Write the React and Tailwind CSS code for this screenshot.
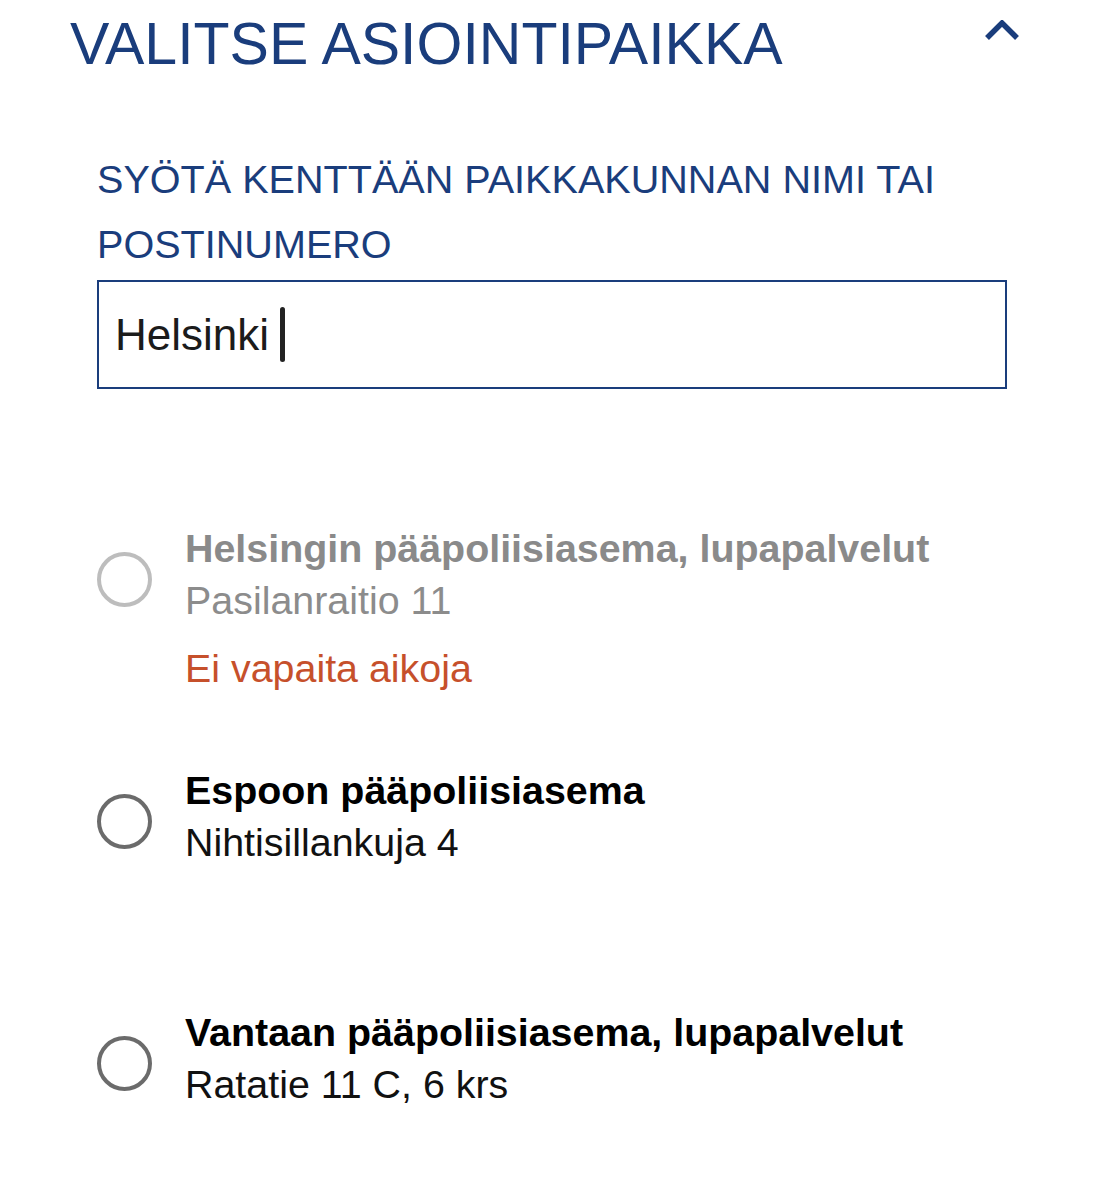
import React from "react";

const offices = [
  {
    id: 1,
    name: "Helsingin pääpoliisiasema, lupapalvelut",
    address: "Pasilanraitio 11",
    status: "Ei vapaita aikoja",
    disabled: true,
  },
  {
    id: 2,
    name: "Espoon pääpoliisiasema",
    address: "Nihtisillankuja 4",
    status: "",
    disabled: false,
  },
  {
    id: 3,
    name: "Vantaan pääpoliisiasema, lupapalvelut",
    address: "Ratatie 11 C, 6 krs",
    status: "",
    disabled: false,
  },
];

const App = () => {
  return (
    <div className="min-h-[1200px] bg-white pl-[70px] pr-[84px] pt-[4px] font-['Liberation_Sans',Arial,sans-serif]">
      {/* Header */}
      <div className="flex items-start justify-between">
        <h1 className="text-[59px] leading-[80px] text-[#1a3d7c] font-normal">
          VALITSE ASIOINTIPAIKKA
        </h1>
        <svg
          width="36"
          height="22"
          viewBox="0 0 36 22"
          className="mt-[16px]"
          fill="none"
        >
          <polyline
            points="3,18 18,3 33,18"
            stroke="#1a3d7c"
            strokeWidth="5.5"
            strokeLinejoin="miter"
          />
        </svg>
      </div>

      <div className="pl-[27px]">
        {/* Search */}
        <label className="mt-[63px] block text-[39.6px] leading-[65px] text-[#1a3d7c]">
          SYÖTÄ KENTTÄÄN PAIKKAKUNNAN NIMI TAI POSTINUMERO
        </label>
        <div className="mt-[3px] flex h-[109px] w-[910px] items-center border-2 border-[#1a3d7c] pl-[16px]">
          <span className="text-[44px] leading-none text-[#1b1b1b]">
            Helsinki
          </span>
          <span className="ml-[11px] inline-block h-[55px] w-[5px] rounded-full bg-[#222]" />
        </div>

        {/* Results */}
        <div className="mt-[133px] flex flex-col gap-[70px]">
          {offices.map((office) => (
            <div key={office.id} className="flex items-start gap-[33px]">
              <div
                className={`mt-[30px] h-[55px] w-[55px] shrink-0 rounded-full border-[4px] ${
                  office.disabled ? "border-[#bdbdbd]" : "border-[#6b6b6b]"
                }`}
              />
              <div className="text-[39.4px] leading-[52px]">
                <p
                  className={`font-bold ${
                    office.disabled ? "text-[#8a8a8a]" : "text-black"
                  }`}
                >
                  {office.name}
                </p>
                <p
                  className={
                    office.disabled ? "text-[#8c8c8c]" : "text-[#111]"
                  }
                >
                  {office.address}
                </p>
                <p className="mt-[16px] h-[52px] text-[#c6502b]">
                  {office.status}
                </p>
              </div>
            </div>
          ))}
        </div>
      </div>
    </div>
  );
};

export default App;
